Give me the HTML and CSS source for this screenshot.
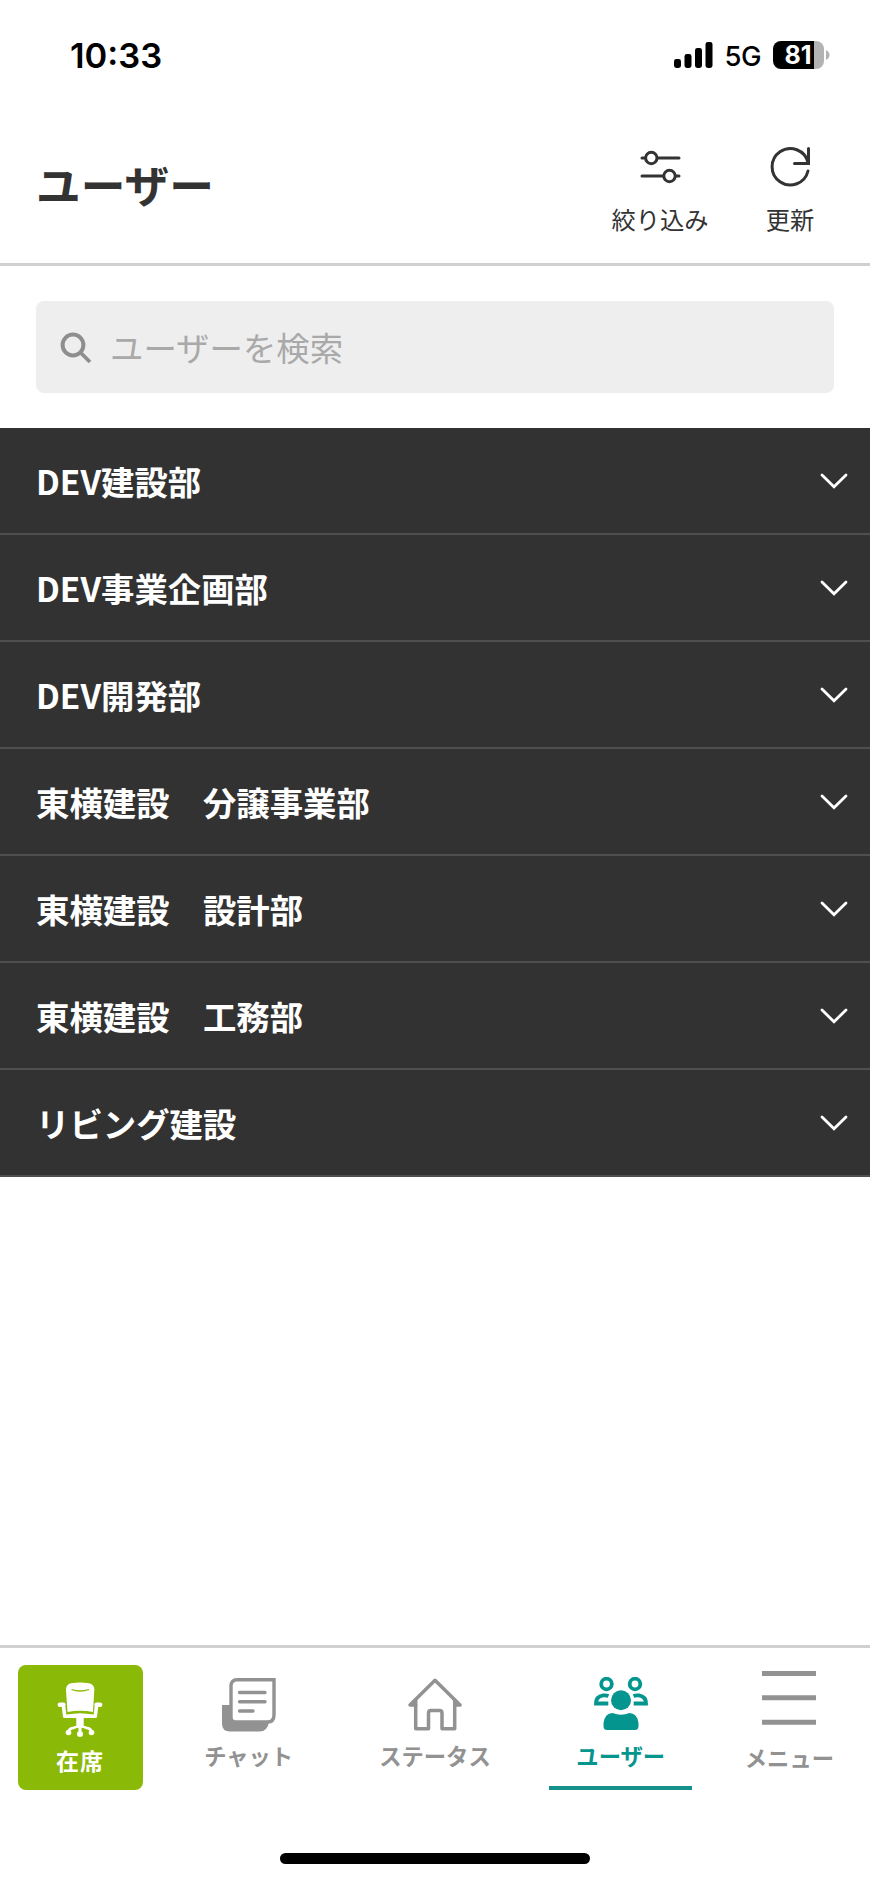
FILE: index.html
```html
<!DOCTYPE html>
<html lang="ja">
<head>
<meta charset="utf-8">
<title>ユーザー</title>
<link rel="stylesheet" href="styles.css">
</head>
<body>
<div class="screen">
  <div class="status-bar">
    <span class="time">10:33</span>
    <div class="status-right">
      <svg class="signal" width="39" height="26" viewBox="0 0 39 26"><rect x="0" y="17" width="7" height="9" rx="2.4"/><rect x="10.5" y="12" width="7" height="14" rx="2.4"/><rect x="21" y="6" width="7" height="20" rx="2.4"/><rect x="31.5" y="0" width="7" height="26" rx="2.4"/></svg>
      <span class="network">5G</span>
      <div class="battery"><span class="battery-level">81</span></div>
      <svg class="battery-cap" width="4" height="10" viewBox="0 0 4 10"><path d="M0 0Q3.5 1.8 3.5 5T0 10z" fill="#b3b3b3"/></svg>
    </div>
  </div>

  <header class="header">
    <h1 class="title">ユーザー</h1>
    <div class="actions">
      <div class="action">
        <svg width="44" height="44" viewBox="0 0 44 44" fill="none" stroke="#333" stroke-width="3" stroke-linecap="round"><path d="M4 14H7M20 14H41M4 32H25M38 32H41"/><circle cx="13.3" cy="14" r="5.7"/><circle cx="31.5" cy="32" r="5.7"/></svg>
        <span>絞り込み</span>
      </div>
      <div class="action">
        <svg width="44" height="44" viewBox="0 0 44 44" fill="none" stroke="#333" stroke-width="3" stroke-linecap="round"><path d="M40 27A18.200 18.200 0 1 1 40 18.500"/><path d="M40.5 4.5V19.5H26.5" stroke-linejoin="miter"/></svg>
        <span>更新</span>
      </div>
    </div>
  </header>

  <div class="search-area">
    <div class="search">
      <svg width="32" height="32" viewBox="0 0 32 32" fill="none" stroke="#8e8e8e"><circle cx="13" cy="13" r="10.400" stroke-width="4"/><path d="M20.5 20.5L30 30" stroke-width="3.800"/></svg>
      <span>ユーザーを検索</span>
    </div>
  </div>

  <ul class="groups">
    <li class="group"><span>DEV建設部</span><svg class="chevron" viewBox="0 0 28 16"><path d="M2 2L14 13.8L26 2"/></svg></li>
    <li class="group"><span>DEV事業企画部</span><svg class="chevron" viewBox="0 0 28 16"><path d="M2 2L14 13.8L26 2"/></svg></li>
    <li class="group"><span>DEV開発部</span><svg class="chevron" viewBox="0 0 28 16"><path d="M2 2L14 13.8L26 2"/></svg></li>
    <li class="group"><span>東横建設　分譲事業部</span><svg class="chevron" viewBox="0 0 28 16"><path d="M2 2L14 13.8L26 2"/></svg></li>
    <li class="group"><span>東横建設　設計部</span><svg class="chevron" viewBox="0 0 28 16"><path d="M2 2L14 13.8L26 2"/></svg></li>
    <li class="group"><span>東横建設　工務部</span><svg class="chevron" viewBox="0 0 28 16"><path d="M2 2L14 13.8L26 2"/></svg></li>
    <li class="group"><span>リビング建設</span><svg class="chevron" viewBox="0 0 28 16"><path d="M2 2L14 13.8L26 2"/></svg></li>
  </ul>

  <nav class="tabs">
    <div class="presence">
      <svg width="46" height="56" viewBox="0 0 46 56">
        <path fill="#fff" d="M14 1.200Q23 -.2 32 1.200Q37.700 2.500 37.300 8L36 30Q23 27.500 10.500 30L9 8Q8.700 2.500 14 1.200z"/>
        <path d="M14.500 7.500Q23 10.500 32 7.500" fill="none" stroke="#8bb907" stroke-width="1.300"/>
        <g fill="none" stroke="#fff">
          <path d="M2.800 22.800H6.500M39.500 22.800H43.200" stroke-width="4.400" stroke-linecap="round"/>
          <path d="M6.500 24L7.700 34.300H38.300L39.500 24" stroke-width="3.600" stroke-linejoin="round"/>
          <path d="M10 34Q23 31 36 34" stroke-width="2.500"/>
          <path d="M23 35V51" stroke-width="3"/>
          <path d="M11.500 50Q12 46.500 16 46Q23 43 30 46Q34 46.500 34.500 50" stroke-width="2.600"/>
        </g>
        <g fill="#fff"><path d="M19.300 36H26.700V44H19.300z"/><circle cx="11.500" cy="50.500" r="2.800"/><circle cx="34.500" cy="50.500" r="2.800"/><circle cx="23" cy="52" r="3"/></g>
      </svg>
      <span>在席</span>
    </div>
    <div class="tab">
      <svg class="tab-icon" viewBox="0 0 54 54"><path d="M0 27H9V40Q9 44 13 44H47Q45.500 53.500 37.500 53.500H8Q0 53.500 0 45.500z" fill="#929292"/><path d="M52 1.800H15Q9 1.800 9 8V39Q9 44 13.500 44H45.500Q52 44 52 37z" fill="#fff" stroke="#929292" stroke-width="3.400"/><path d="M17.500 14.500H43M17.500 23.800H43M17.500 33H31" stroke="#929292" stroke-width="3.400" stroke-linecap="round"/></svg>
      <span class="tab-label">チャット</span>
    </div>
    <div class="tab">
      <svg class="tab-icon" viewBox="0 0 54 54" fill="none" stroke="#929292" stroke-width="3.500" stroke-linejoin="round" stroke-linecap="round"><path d="M2 27L27 2.300L52 27H46.700V50.800H34V35Q34 32.500 31.500 32.500H23Q20.500 32.500 20.500 35V50.800H7.700V27z"/><path d="M7.700 27V22M46.700 27V22"/></svg>
      <span class="tab-label">ステータス</span>
    </div>
    <div class="tab tab-active">
      <svg class="tab-icon" viewBox="0 0 54 54"><g fill="none" stroke="#05958f" stroke-width="3.800"><circle cx="12.500" cy="7" r="5.300"/><circle cx="41" cy="7" r="5.300"/><path d="M14.500 19Q12 18 9 18.400Q2 19.500 2 26.500H14.300M39.500 19Q42 18 45 18.400Q52 19.500 52 26.500H39.700"/></g><g fill="#05958f"><circle cx="27" cy="23.200" r="10"/><path d="M9.500 48V46Q11 36 18.500 36Q27 39.500 35.500 36Q43 36 44.500 46V49Q44.500 53 41 53H13Q9.500 53 9.500 49z"/></g></svg>
      <span class="tab-label">ユーザー</span>
    </div>
    <div class="tab tab-menu">
      <svg class="tab-icon" viewBox="0 0 54 54"><path d="M0 2.500H54M0 26.700H54M0 51.200H54" stroke="#929292" stroke-width="5"/></svg>
      <span class="tab-label">メニュー</span>
    </div>
  </nav>
  <div class="home-area"><div class="home-indicator"></div></div>
</div>
</body>
</html>
```
FILE: styles.css
```css
* { box-sizing: border-box; }

body {
  margin: 0;
  background: #fff;
  color: #333;
  font-family: "Noto Sans CJK JP", sans-serif;
}

svg { display: block; flex: none; }

.screen {
  display: flex;
  flex-direction: column;
  width: 870px;
  height: 1882px;
}

.status-bar {
  display: flex;
  align-items: center;
  justify-content: space-between;
  height: 110px;
  padding: 0 40px 0 70px;
  color: #000;
  font-family: Inter, sans-serif;
}

.time {
  font-size: 34.5px;
  font-weight: 600;
}

.status-right {
  display: flex;
  align-items: center;
}

.network {
  margin: 2px 12px 0 11px;
  font-size: 27.5px;
  font-weight: 500;
  letter-spacing: -0.5px;
}

.battery {
  width: 51px;
  height: 28px;
  border-radius: 8px;
  background: linear-gradient(to right, #000 41px, #b3b3b3 41px);
  color: #fff;
  text-align: center;
}

.battery-level {
  display: block;
  margin-left: -1px;
  font-size: 25px;
  font-weight: 700;
  line-height: 28px;
}

.battery-cap { margin-left: 2px; }

.header {
  display: flex;
  justify-content: space-between;
  height: 156px;
  padding: 34px 35px 0 36px;
  border-bottom: 3px solid #d0d0d0;
}

.title {
  margin: 8px 0 0;
  font-size: 44.7px;
  font-weight: 700;
  line-height: 64px;
}

.actions { display: flex; }

.action {
  display: flex;
  flex-direction: column;
  align-items: center;
  width: 130px;
  font-size: 24.3px;
  line-height: 36px;
}

.action svg { margin-bottom: 13px; }
.action + .action { margin-right: -20px; }

.search-area { padding: 35px 36px; }

.search {
  display: flex;
  align-items: center;
  gap: 18px;
  height: 92px;
  padding-left: 24px;
  border-radius: 8px;
  background: #eee;
  color: #a9a9a9;
  font-size: 33.4px;
  font-weight: 400;
}

.search svg { margin-top: 2px; }
.search span { padding-bottom: 2px; }

.groups {
  margin: 0;
  padding: 0;
  list-style: none;
}

.group {
  display: flex;
  align-items: center;
  justify-content: space-between;
  height: 107px;
  padding: 0 22px 0 36px;
  border-bottom: 2px solid #4f4f4f;
  background: #323232;
  color: #fff;
  font-size: 33.4px;
  font-weight: 700;
}

.group span { padding-bottom: 1px; }

.chevron {
  width: 28px;
  height: 16px;
  fill: none;
  stroke: #fff;
  stroke-width: 2.8;
  stroke-linecap: round;
}

.tabs {
  display: grid;
  grid-template-columns: 137px 186.300px 186.300px 186.300px 151px;
  height: 160px;
  margin-top: auto;
  padding: 17px 0 0 18px;
  border-top: 3px solid #d0d0d0;
}

.presence {
  display: flex;
  flex-direction: column;
  align-items: center;
  width: 125px;
  height: 125px;
  padding: 17px 1px 0 0;
  border-radius: 8px;
  background: #8bb907;
  color: #fff;
  font-size: 23px;
  font-weight: 700;
  letter-spacing: 1px;
  line-height: 34px;
}

.presence span { margin-top: 5px; }

.tab {
  display: flex;
  flex-direction: column;
  align-items: center;
  justify-self: center;
  width: 143px;
  height: 125px;
  padding: 13px 0 0 1px;
  color: #929292;
}

.tab-icon {
  width: 54px;
  height: 54px;
}

.tab-label {
  margin-top: 6px;
  font-size: 22.3px;
  font-weight: 700;
  line-height: 34px;
}

.tab-active {
  padding-left: 0;
  border-bottom: 4px solid #14918b;
  color: #05958f;
}

.tab-active .tab-icon { margin-top: -1px; margin-bottom: 1px; }
.tab-menu { padding: 6px 0 0; }
.tab-menu .tab-label { margin-top: 15px; }

.home-area {
  display: flex;
  justify-content: center;
  height: 77px;
  padding-top: 48px;
}

.home-indicator {
  width: 310px;
  height: 11px;
  border-radius: 6px;
  background: #000;
}
```
